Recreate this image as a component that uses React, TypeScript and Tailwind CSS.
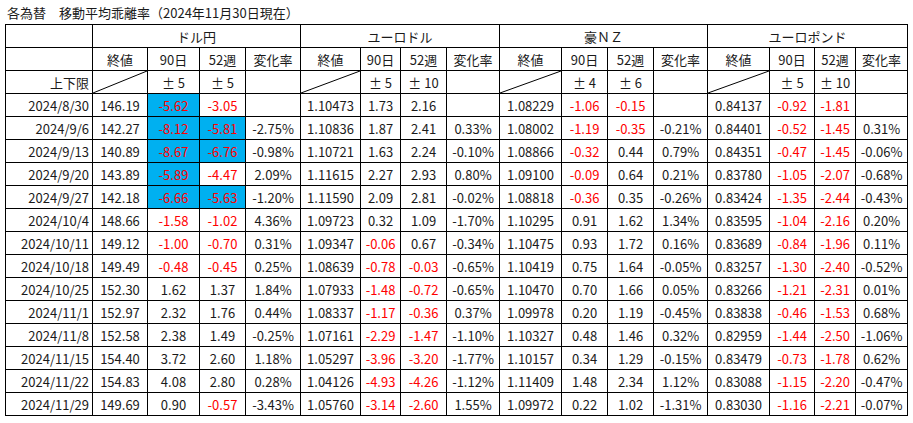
import React from "react";

type Cell = { v: string; r?: boolean; b?: boolean };

const raw: string[][] = [
  ["2024/8/30", "146.19", "-5.62rb", "-3.05r", "", "1.10473", "1.73", "2.16", "", "1.08229", "-1.06r", "-0.15r", "", "0.84137", "-0.92r", "-1.81r", ""],
  ["2024/9/6", "142.27", "-8.12rb", "-5.81rb", "-2.75%", "1.10836", "1.87", "2.41", "0.33%", "1.08002", "-1.19r", "-0.35r", "-0.21%", "0.84401", "-0.52r", "-1.45r", "0.31%"],
  ["2024/9/13", "140.89", "-8.67rb", "-6.76rb", "-0.98%", "1.10721", "1.63", "2.24", "-0.10%", "1.08866", "-0.32r", "0.44", "0.79%", "0.84351", "-0.47r", "-1.45r", "-0.06%"],
  ["2024/9/20", "143.89", "-5.89rb", "-4.47r", "2.09%", "1.11615", "2.27", "2.93", "0.80%", "1.09100", "-0.09r", "0.64", "0.21%", "0.83780", "-1.05r", "-2.07r", "-0.68%"],
  ["2024/9/27", "142.18", "-6.66rb", "-5.63rb", "-1.20%", "1.11590", "2.09", "2.81", "-0.02%", "1.08818", "-0.36r", "0.35", "-0.26%", "0.83424", "-1.35r", "-2.44r", "-0.43%"],
  ["2024/10/4", "148.66", "-1.58r", "-1.02r", "4.36%", "1.09723", "0.32", "1.09", "-1.70%", "1.10295", "0.91", "1.62", "1.34%", "0.83595", "-1.04r", "-2.16r", "0.20%"],
  ["2024/10/11", "149.12", "-1.00r", "-0.70r", "0.31%", "1.09347", "-0.06r", "0.67", "-0.34%", "1.10475", "0.93", "1.72", "0.16%", "0.83689", "-0.84r", "-1.96r", "0.11%"],
  ["2024/10/18", "149.49", "-0.48r", "-0.45r", "0.25%", "1.08639", "-0.78r", "-0.03r", "-0.65%", "1.10419", "0.75", "1.64", "-0.05%", "0.83257", "-1.30r", "-2.40r", "-0.52%"],
  ["2024/10/25", "152.30", "1.62", "1.37", "1.84%", "1.07933", "-1.48r", "-0.72r", "-0.65%", "1.10470", "0.70", "1.66", "0.05%", "0.83266", "-1.21r", "-2.31r", "0.01%"],
  ["2024/11/1", "152.97", "2.32", "1.76", "0.44%", "1.08337", "-1.17r", "-0.36r", "0.37%", "1.09978", "0.20", "1.19", "-0.45%", "0.83838", "-0.46r", "-1.53r", "0.68%"],
  ["2024/11/8", "152.58", "2.38", "1.49", "-0.25%", "1.07161", "-2.29r", "-1.47r", "-1.10%", "1.10327", "0.48", "1.46", "0.32%", "0.82959", "-1.44r", "-2.50r", "-1.06%"],
  ["2024/11/15", "154.40", "3.72", "2.60", "1.18%", "1.05297", "-3.96r", "-3.20r", "-1.77%", "1.10157", "0.34", "1.29", "-0.15%", "0.83479", "-0.73r", "-1.78r", "0.62%"],
  ["2024/11/22", "154.83", "4.08", "2.80", "0.28%", "1.04126", "-4.93r", "-4.26r", "-1.12%", "1.11409", "1.48", "2.34", "1.12%", "0.83088", "-1.15r", "-2.20r", "-0.47%"],
  ["2024/11/29", "149.69", "0.90", "-0.57r", "-3.43%", "1.05760", "-3.14r", "-2.60r", "1.55%", "1.09972", "0.22", "1.02", "-1.31%", "0.83030", "-1.16r", "-2.21r", "-0.07%"],
];

function parse(s: string): Cell {
  const b = s.endsWith("b");
  let t = b ? s.slice(0, -1) : s;
  const r = t.endsWith("r");
  t = r ? t.slice(0, -1) : t;
  return { v: t, r, b };
}

const widths = [
  "w-[87px]", "w-[55px]", "w-[52px]", "w-[46px]", "w-[55px]",
  "w-[60px]", "w-[40px]", "w-[46px]", "w-[53px]",
  "w-[62px]", "w-[46px]", "w-[46px]", "w-[54px]",
  "w-[62px]", "w-[45px]", "w-[41px]", "w-[52px]",
];

const groups = ["ドル円", "ユーロドル", "豪ＮＺ", "ユーロポンド"];
const limits = [
  ["± 5", "± 5"],
  ["± 5", "± 10"],
  ["± 4", "± 6"],
  ["± 5", "± 10"],
];

const td = "border border-black p-0 text-center whitespace-nowrap";

function Diag() {
  return (
    <td className={td + " relative"}>
      <svg
        className="absolute inset-0 w-full h-full"
        viewBox="0 0 100 100"
        preserveAspectRatio="none"
      >
        <line x1="0" y1="100" x2="100" y2="0" stroke="#000" strokeWidth="1" vectorEffect="non-scaling-stroke" />
      </svg>
    </td>
  );
}

export default function App() {
  return (
    <div
      className="w-[913px] h-[423px] bg-white text-[#1a1a1a] text-[13px] overflow-hidden"
      style={{ fontFamily: '"Noto Sans CJK JP", "Noto Sans", sans-serif' }}
    >
      <div className="h-[24px] flex items-center pl-[7px] leading-none">
        各為替　移動平均乖離率（2024年11月30日現在）
      </div>
      <table className="ml-[5px] table-fixed border-collapse w-[902px] leading-none">
        <colgroup>
          {widths.map((w, i) => (
            <col key={i} className={w} />
          ))}
        </colgroup>
        <tbody>
          <tr className="h-[23px]">
            <td className={td}></td>
            {groups.map((g) => (
              <td key={g} colSpan={4} className={td}>
                {g}
              </td>
            ))}
          </tr>
          <tr className="h-[23px]">
            <td className={td}></td>
            {groups.map((g) => (
              <React.Fragment key={g}>
                <td className={td}>終値</td>
                <td className={td}>90日</td>
                <td className={td}>52週</td>
                <td className={td}>変化率</td>
              </React.Fragment>
            ))}
          </tr>
          <tr className="h-[23px]">
            <td className={td + " text-right pr-[3px]"}>上下限</td>
            {limits.map((l, i) => (
              <React.Fragment key={i}>
                <Diag />
                <td className={td}>{l[0]}</td>
                <td className={td}>{l[1]}</td>
                <td className={td}></td>
              </React.Fragment>
            ))}
          </tr>
          {raw.map((row, ri) => (
            <tr key={ri} className="h-[23px]">
              {row.map((s, ci) => {
                if (ci === 0) {
                  return (
                    <td key={ci} className={td + " text-right pr-[3px]"}>
                      {s}
                    </td>
                  );
                }
                const c = parse(s);
                return (
                  <td
                    key={ci}
                    className={
                      td +
                      (c.b ? " bg-[#00b0f0]" : "") +
                      (c.r ? " text-[#ff0000]" : "")
                    }
                  >
                    {c.v}
                  </td>
                );
              })}
            </tr>
          ))}
        </tbody>
      </table>
    </div>
  );
}
